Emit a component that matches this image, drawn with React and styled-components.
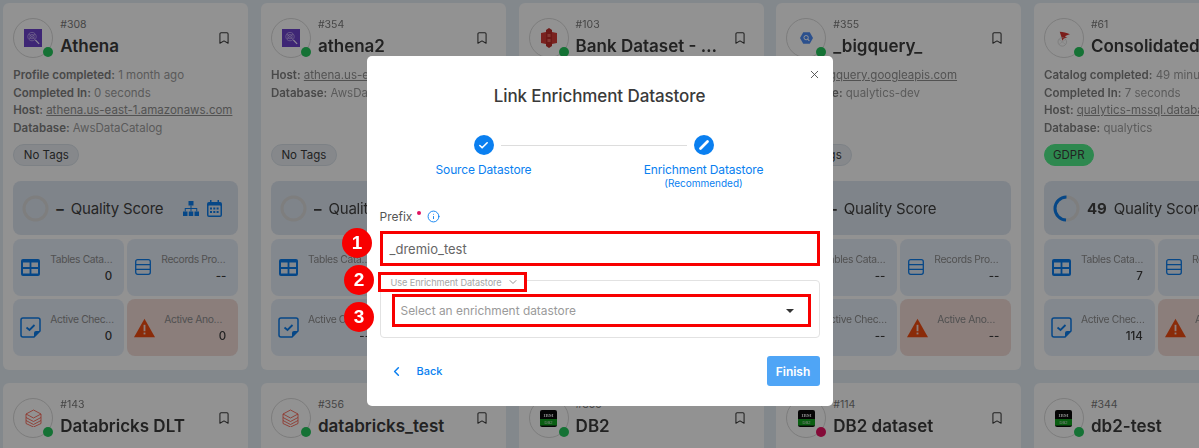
import React from "react";
import styled, { createGlobalStyle } from "styled-components";
import { Bookmark, Check, ChevronDown, ChevronLeft, Info, X } from "lucide-react";

const Global = createGlobalStyle`
  html, body { margin: 0; padding: 0; width: 1199px; height: 448px; overflow: hidden; }
  body { font-family: Inter, "Noto Sans", sans-serif; background: #dfe7ee; }
  * { box-sizing: border-box; }
`;

const Page = styled.div`
  position: relative;
  width: 1199px;
  height: 448px;
  overflow: hidden;
`;
const Grid = styled.div`
  display: grid;
  grid-template-columns: repeat(5, 245px);
  column-gap: 12.67px;
  row-gap: 13px;
  padding: 3px 0 0 3.3px;
  width: 1400px;
  filter: blur(0.6px);
`;
const Card = styled.article`
  background: #f8f8f8;
  border-radius: 6px;
  padding: 15px 10px;
  height: 367px;
`;
const Head = styled.header`
  display: flex;
  gap: 7px;
  align-items: flex-start;
`;
const Avatar = styled.div`
  position: relative;
  flex: none;
  width: 40px;
  height: 40px;
  border-radius: 50%;
  border: 1px solid #d4d4d4;
  display: flex;
  align-items: center;
  justify-content: center;
`;
const Dot = styled.span`
  position: absolute;
  right: -1px;
  bottom: 0;
  width: 10px;
  height: 10px;
  border-radius: 50%;
  background: ${(p) => p.$color || "#24c25a"};
`;
const HeadText = styled.div`
  flex: 1;
  min-width: 0;
`;
const Num = styled.div`
  font-size: 10.5px;
  line-height: 13px;
  color: #777;
`;
const Title = styled.h3`
  margin: 4px 0 0;
  font-size: 17px;
  line-height: 22px;
  font-weight: 600;
  color: #3a3a3a;
  white-space: nowrap;
  overflow: hidden;
  text-overflow: ellipsis;
`;
const Mark = styled.div`
  flex: none;
  margin: 13px 7px 0 0;
  color: #3a3a3a;
  display: flex;
`;
const Info4 = styled.div`
  margin-top: 9px;
  height: 70px;
  font-size: 11.5px;
  line-height: 17.67px;
  color: #9a9a9a;
  white-space: nowrap;
  overflow: hidden;
`;
const Line = styled.div`
  overflow: hidden;
`;
const Key = styled.b`
  font-weight: 600;
  color: #7c7c7c;
`;
const Link = styled.span`
  text-decoration: underline;
  color: #8c8c8c;
`;
const Tag = styled.div`
  display: inline-flex;
  align-items: center;
  height: 22px;
  margin-top: 7px;
  padding: 0 ${(p) => (p.$green ? 8 : 9.5)}px;
  border-radius: 11px;
  font-size: 11.5px;
  color: #3a3a3a;
  background: ${(p) => (p.$green ? "#4ee886" : "#e4e8ed")};
  border: 1px solid ${(p) => (p.$green ? "#4ee886" : "#d5dce3")};
`;
const Score = styled.div`
  margin-top: 15px;
  height: 54px;
  border-radius: 8px;
  background: #d8e0ea;
  display: flex;
  align-items: center;
  padding: 0 16px 0 9px;
  font-size: 15px;
  color: #404040;
`;
const ScoreVal = styled.b`
  font-weight: 700;
  margin: 0 7px 0 7px;
  min-width: 7px;
`;
const ScoreLabel = styled.span`
  letter-spacing: -0.2px;
  white-space: nowrap;
`;
const ScoreIcons = styled.div`
  margin-left: auto;
  display: flex;
  align-items: center;
  gap: 8px;
`;
const Stats = styled.div`
  margin-top: 3.5px;
  display: grid;
  grid-template-columns: 111px 111px;
  gap: 3.5px 3px;
`;
const Stat = styled.div`
  height: 57px;
  border-radius: 8px;
  background: ${(p) => (p.$warn ? "#ecd6d2" : "#dfe7f2")};
  display: flex;
  align-items: center;
  gap: 9px;
  padding: 0 10px 0 7px;
`;
const Slot = styled.div`
  flex: none;
  width: ${(p) => p.$w}px;
  display: flex;
  justify-content: center;
`;
const StatText = styled.div`
  flex: 1;
  min-width: 0;
`;
const StatLabel = styled.div`
  font-size: 10.3px;
  line-height: 14px;
  color: #8a8a8a;
  white-space: nowrap;
  overflow: hidden;
  text-overflow: ellipsis;
  letter-spacing: -0.35px;
`;
const StatVal = styled.div`
  margin-top: 3px;
  padding-right: 2px;
  font-size: 11.5px;
  line-height: 14px;
  font-weight: 500;
  color: #3a3a3a;
  text-align: right;
`;

const Overlay = styled.div`
  position: absolute;
  inset: 0;
  background: rgba(0, 0, 0, 0.41);
  display: flex;
  justify-content: center;
  align-items: flex-start;
  padding-top: 56px;
`;
const Modal = styled.section`
  position: relative;
  width: 466px;
  height: 350px;
  background: #fff;
  border-radius: 5px;
  padding: 0 13px;
`;
const Close = styled.div`
  position: absolute;
  top: 12px;
  right: 12px;
  display: flex;
  color: #444;
`;
const ModalTitle = styled.h2`
  margin: 0;
  padding-top: 29px;
  font-size: 17px;
  line-height: 22px;
  font-weight: 500;
  color: #3a3a3a;
  text-align: center;
  letter-spacing: -0.1px;
`;
const Stepper = styled.div`
  display: flex;
  justify-content: space-between;
  margin-top: 28px;
  padding: 0 31px 0 19px;
  position: relative;
`;
const Step = styled.div`
  width: 170px;
  display: flex;
  flex-direction: column;
  align-items: center;
  color: #0a7ff0;
`;
const StepCircle = styled.div`
  width: 20px;
  height: 20px;
  border-radius: 50%;
  background: #0a7ff0;
  color: #fff;
  display: flex;
  align-items: center;
  justify-content: center;
`;
const Connector = styled.div`
  position: absolute;
  left: 121px;
  top: 9.5px;
  width: 186px;
  height: 1px;
  background: #ddd;
`;
const StepName = styled.div`
  margin-top: 7px;
  font-size: 12px;
  line-height: 16px;
  white-space: nowrap;
  letter-spacing: -0.15px;
`;
const StepSub = styled.div`
  font-size: 10px;
  line-height: 10px;
  white-space: nowrap;
`;
const PrefixLabel = styled.div`
  display: flex;
  align-items: center;
  margin-top: 20px;
  height: 16px;
  font-size: 12px;
  color: #555;
`;
const Req = styled.span`
  width: 4px;
  height: 4px;
  border-radius: 50%;
  background: #e0115f;
  margin: -6px 6px 0 5px;
`;
const Marked = styled.div`
  border: 3px solid #f80000;
`;
const PrefixBox = styled(Marked)`
  margin-top: 7px;
  height: 35px;
  padding-left: 7px;
  display: flex;
  align-items: center;
  font-size: 13px;
  color: #666;
`;
const Fieldset = styled.div`
  position: relative;
  margin-top: 14px;
  height: 58px;
  border: 1px solid #e2e2e2;
  border-radius: 4px;
  padding: 13px 8px 0 11px;
`;
const LegendBox = styled(Marked)`
  position: absolute;
  left: -3px;
  top: -9px;
  width: 149px;
  height: 20px;
  background: #fff;
  display: flex;
  align-items: center;
  gap: 5px;
  padding-left: 10px;
  font-size: 9.2px;
  color: #a6a6a6;
  white-space: nowrap;
  letter-spacing: -0.1px;
`;
const SelectBox = styled(Marked)`
  height: 33px;
  display: flex;
  align-items: center;
  justify-content: space-between;
  padding: 0 14px 0 6px;
  font-size: 11.9px;
  color: #9a9a9a;
  background: #fff;
`;
const Caret = styled.span`
  width: 0;
  height: 0;
  border-left: 4.5px solid transparent;
  border-right: 4.5px solid transparent;
  border-top: 4px solid #333;
`;
const Footer = styled.div`
  display: flex;
  align-items: center;
  justify-content: space-between;
  margin-top: 18px;
`;
const BackBtn = styled.div`
  display: flex;
  align-items: center;
  gap: 13px;
  margin-left: 9px;
  color: #0a7ff0;
  font-size: 11px;
  font-weight: 500;
`;
const Finish = styled.div`
  width: 53px;
  height: 30px;
  border-radius: 3px;
  background: #4fa5f6;
  color: #fff;
  font-size: 12px;
  font-weight: 600;
  display: flex;
  align-items: center;
  justify-content: center;
`;
const Badge = styled.div`
  position: absolute;
  left: ${(p) => p.$x - 15}px;
  top: ${(p) => p.$y - 15}px;
  width: 30px;
  height: 30px;
  border-radius: 50%;
  background: #f80000;
  color: #fff;
  font-family: "Liberation Sans", sans-serif;
  font-size: 19px;
  font-weight: 700;
  display: flex;
  align-items: center;
  justify-content: center;
`;

const blue = "#0b7ae6";

const TableIcon = () => (
  <svg width="19" height="17" viewBox="0 0 19 17">
    <rect width="19" height="17" rx="2" fill={blue} />
    <rect x="2" y="3.5" width="6.6" height="4.5" fill="#dfe7f2" />
    <rect x="10.4" y="3.5" width="6.6" height="4.5" fill="#dfe7f2" />
    <rect x="2" y="10" width="6.6" height="4.5" fill="#dfe7f2" />
    <rect x="10.4" y="10" width="6.6" height="4.5" fill="#dfe7f2" />
  </svg>
);
const RowsIcon = () => (
  <svg width="16" height="16" viewBox="0 0 16 16" fill="none" stroke={blue} strokeWidth="1.3">
    <rect x=".7" y=".7" width="14.6" height="14.6" rx="2" />
    <path d="M1 5.6h14M1 10.4h14" />
  </svg>
);
const CheckIcon = () => (
  <svg width="21" height="21" viewBox="0 0 21 21" fill="none">
    <path d="M3 1h15a2 2 0 0 1 2 2v11l-6 6H3a2 2 0 0 1-2-2V3a2 2 0 0 1 2-2z" stroke={blue} strokeWidth="1.5" />
    <path d="M14 20v-4a2 2 0 0 1 2-2h4z" fill={blue} />
    <path d="M6.5 10.5l3 2.5 5-5" stroke={blue} strokeWidth="1.8" />
  </svg>
);
const WarnIcon = () => (
  <svg width="23" height="20" viewBox="0 0 23 20">
    <path d="M11.5 0L23 20H0z" fill="#ea4a10" />
    <rect x="10.5" y="6.5" width="2" height="7" fill="#f3d6cf" />
    <rect x="10.5" y="15" width="2" height="2" fill="#f3d6cf" />
  </svg>
);
const TreeIcon = () => (
  <svg width="16" height="15" viewBox="0 0 16 15" fill={blue}>
    <rect x="5.5" y="0" width="5" height="4.5" />
    <rect x="0" y="10.5" width="4.5" height="4.5" />
    <rect x="5.75" y="10.5" width="4.5" height="4.5" />
    <rect x="11.5" y="10.5" width="4.5" height="4.5" />
    <path d="M7.5 4.5h1v2.5h5.75v3.5h-1V8H8.5v2.5h-1V8H2.75v2.5h-1V7H7.5z" />
  </svg>
);
const CalIcon = () => (
  <svg width="15" height="17" viewBox="0 0 15 17">
    <path d="M3 0h1.5v2h6V0H12v2h1a2 2 0 0 1 2 2v11a2 2 0 0 1-2 2H2a2 2 0 0 1-2-2V4a2 2 0 0 1 2-2h1z" fill={blue} />
    <rect x="1.5" y="5.5" width="12" height="10" rx=".5" fill="#d8e0ea" />
    {[3, 6.3, 9.6].map((x) => (
      <React.Fragment key={x}>
        <rect x={x} y="7.5" width="2" height="2" fill={blue} />
        <rect x={x} y="11" width="2" height="2" fill={blue} />
      </React.Fragment>
    ))}
  </svg>
);
const Ring = ({ pct }) => {
  const r = 11.5;
  const c = 2 * Math.PI * r;
  return (
    <svg width="27" height="27" viewBox="0 0 27 27" fill="none">
      <circle cx="13.5" cy="13.5" r={r} stroke="#d6d6d6" strokeWidth="3" />
      {pct > 0 && (
        <circle
          cx="13.5"
          cy="13.5"
          r={r}
          stroke={blue}
          strokeWidth="3"
          strokeDasharray={`${(c * pct) / 100} ${c}`}
          transform="rotate(-90 13.5 13.5) scale(1 -1) translate(0 -27)"
        />
      )}
    </svg>
  );
};

const AthenaLogo = () => (
  <svg width="18" height="18" viewBox="0 0 18 18">
    <rect width="18" height="18" fill="#6a41c8" />
    <g fill="none" stroke="#d8c8f8" strokeWidth=".6">
      <circle cx="8" cy="7.6" r="4.2" />
      <circle cx="8" cy="7.6" r="2.2" />
      <path d="M11 10.8l4 4M4.8 5l6.4 5.4M11 5l-6 5" />
    </g>
    <path d="M11.5 11.2l3.6 3.6" stroke="#eee6fc" strokeWidth="1.2" />
  </svg>
);
const BankLogo = () => (
  <svg width="16" height="20" viewBox="0 0 16 20">
    <path d="M0 5l5-1v12l-5-1z" fill="#d03a36" />
    <path d="M16 5l-5-1v12l5-1z" fill="#d03a36" />
    <path d="M5 2l3-2 3 2v16l-3 2-3-2z" fill="#b82c28" />
    <rect x="6.5" y="6" width="3" height="3" fill="#e06058" />
    <rect x="6.5" y="11" width="3" height="3" fill="#e06058" />
  </svg>
);
const BigQueryLogo = () => (
  <svg width="13" height="12" viewBox="0 0 18 16">
    <path d="M4.5 0h9L18 8l-4.5 8h-9L0 8z" fill="#4a88f0" />
    <circle cx="8.5" cy="7.5" r="3" fill="none" stroke="#fff" strokeWidth="1.3" />
    <path d="M10.5 9.5l2.5 2.5" stroke="#fff" strokeWidth="1.4" />
  </svg>
);
const SqlLogo = () => (
  <svg width="14" height="17" viewBox="0 0 16 20" fill="none">
    <path d="M3 2c4 0 8 1 12 3-3 .5-4 1.500-6 2.500 1 .5 2 .5 3 1-3 .5-5 2-6 4-.5-3-2-7-3-10.500z" fill="#d2322d" />
    <ellipse cx="6" cy="14" rx="5" ry="5" stroke="#c4c4c4" strokeWidth=".7" />
    <path d="M2 11l8 6M10 11l-8 6" stroke="#ccc" strokeWidth=".5" />
  </svg>
);
const BricksLogo = () => (
  <svg width="17" height="18" viewBox="0 0 17 18" fill="none" stroke="#f2503f" strokeWidth=".8">
    <path d="M8.5 1L16 5 8.5 9 1 5z" />
    <path d="M1 8.500l7.500 4 7.500-4M1 11.500l7.500 4 7.500-4M1 5v9.500l7.500 3.500 7.500-3.500V5" />
  </svg>
);
const DbLogo = () => (
  <svg width="17" height="17" viewBox="0 0 17 17">
    <rect width="17" height="17" rx="2" fill="#0a0a0a" />
    <rect y="9" width="17" height="6.500" fill="#12a020" />
    <text x="8.500" y="7" textAnchor="middle" fontSize="5" fontWeight="700" fill="#ddd" fontFamily="Liberation Serif, serif">IBM</text>
    <text x="8.500" y="13.800" textAnchor="middle" fontSize="4" fill="#ddd" fontFamily="Liberation Sans, sans-serif">DB2</text>
  </svg>
);
const PencilGlyph = () => (
  <svg width="12" height="12" viewBox="0 0 12 12">
    <path d="M2.500 9.500L9.500 2.500" stroke="#fff" strokeWidth="2.800" strokeLinecap="round" />
  </svg>
);

const cards = [
  { id: 308, name: "Athena", logo: <AthenaLogo />, lines: [["Profile completed:", "1 month ago"], ["Completed In:", "0 seconds"], ["Host:", "athena.us-east-1.amazonaws.com", 1], ["Database:", "AwsDataCatalog"]], tag: "No Tags", val: "–", icons: true, stats: ["0", "--", "0", "0"] },
  { id: 354, name: "athena2", logo: <AthenaLogo />, lines: [["Host:", "athena.us-east-1.amazonaws.com", 1], ["Database:", "AwsDataCatalog"]], tag: "No Tags", val: "–", stats: ["--", "--", "--", "--"] },
  { id: 103, name: "Bank Dataset - Redshift", logo: <BankLogo />, lines: [["Host:", "redshift.amazonaws.com", 1], ["Database:", "dev"]], tag: "No Tags", val: "–", stats: ["--", "--", "--", "--"] },
  { id: 355, name: "_bigquery_", logo: <BigQueryLogo />, lines: [["Host:", "bigquery.googleapis.com", 1], ["Database:", "qualytics-dev"]], tag: "No Tags", val: "–", stats: ["--", "--", "--", "--"] },
  { id: 61, name: "Consolidated Balance", logo: <SqlLogo />, lines: [["Catalog completed:", "49 minutes ago"], ["Completed In:", "7 seconds"], ["Host:", "qualytics-mssql.database.windows.net", 1], ["Database:", "qualytics"]], tag: "GDPR", green: true, val: "49", pct: 49, stats: ["7", "--", "114", "--"] },
  { id: 143, name: "Databricks DLT", logo: <BricksLogo /> },
  { id: 356, name: "databricks_test", logo: <BricksLogo /> },
  { id: 355, name: "DB2", logo: <DbLogo /> },
  { id: 114, name: "DB2 dataset", logo: <DbLogo />, dot: "#e0115f" },
  { id: 344, name: "db2-test", logo: <DbLogo /> },
];

const statDefs = [
  { label: "Tables Cataloged", Icon: TableIcon, w: 21 },
  { label: "Records Profiled", Icon: RowsIcon, w: 18 },
  { label: "Active Checks Count", Icon: CheckIcon, w: 21 },
  { label: "Active Anomalies", Icon: WarnIcon, w: 21, warn: true },
];

const DataCard = ({ c }) => (
  <Card>
    <Head>
      <Avatar>
        {c.logo}
        <Dot $color={c.dot} />
      </Avatar>
      <HeadText>
        <Num>#{c.id}</Num>
        <Title>{c.name}</Title>
      </HeadText>
      <Mark>
        <Bookmark size={14} strokeWidth={1.8} />
      </Mark>
    </Head>
    {c.lines && (
      <>
        <Info4>
          {c.lines.map(([k, v, link]) => (
            <Line key={k}>
              <Key>{k}</Key> {link ? <Link>{v}</Link> : v}
            </Line>
          ))}
        </Info4>
        <Tag $green={c.green}>{c.tag}</Tag>
        <Score>
          <Ring pct={c.pct || 0} />
          <ScoreVal>{c.val}</ScoreVal>
          <ScoreLabel>Quality Score</ScoreLabel>
          {c.icons && (
            <ScoreIcons>
              <TreeIcon />
              <CalIcon />
            </ScoreIcons>
          )}
        </Score>
        <Stats>
          {statDefs.map((s, i) => (
            <Stat key={s.label} $warn={s.warn}>
              <Slot $w={s.w}>
                <s.Icon />
              </Slot>
              <StatText>
                <StatLabel>{s.label}</StatLabel>
                <StatVal>{c.stats[i]}</StatVal>
              </StatText>
            </Stat>
          ))}
        </Stats>
      </>
    )}
  </Card>
);

export default function App() {
  return (
    <Page>
      <Global />
      <Grid>
        {cards.map((c, i) => (
          <DataCard key={i} c={c} />
        ))}
      </Grid>
      <Overlay>
        <Modal>
          <Close>
            <X size={13} strokeWidth={1.6} />
          </Close>
          <ModalTitle>Link Enrichment Datastore</ModalTitle>
          <Stepper>
            <Connector />
            <Step>
              <StepCircle>
                <Check size={11} strokeWidth={3.5} />
              </StepCircle>
              <StepName>Source Datastore</StepName>
            </Step>
            <Step>
              <StepCircle>
                <PencilGlyph />
              </StepCircle>
              <StepName>Enrichment Datastore</StepName>
              <StepSub>(Recommended)</StepSub>
            </Step>
          </Stepper>
          <PrefixLabel>
            Prefix
            <Req />
            <Info size={13} strokeWidth={1.7} color="#0a7ff0" />
          </PrefixLabel>
          <PrefixBox>_dremio_test</PrefixBox>
          <Fieldset>
            <LegendBox>
              Use Enrichment Datastore
              <ChevronDown size={12} strokeWidth={1.6} color="#777" />
            </LegendBox>
            <SelectBox>
              Select an enrichment datastore
              <Caret />
            </SelectBox>
          </Fieldset>
          <Footer>
            <BackBtn>
              <ChevronLeft size={15} strokeWidth={2.4} />
              Back
            </BackBtn>
            <Finish>Finish</Finish>
          </Footer>
        </Modal>
        <Badge $x={357} $y={243}>1</Badge>
        <Badge $x={359} $y={280}>2</Badge>
        <Badge $x={359} $y={317}>3</Badge>
      </Overlay>
    </Page>
  );
}
